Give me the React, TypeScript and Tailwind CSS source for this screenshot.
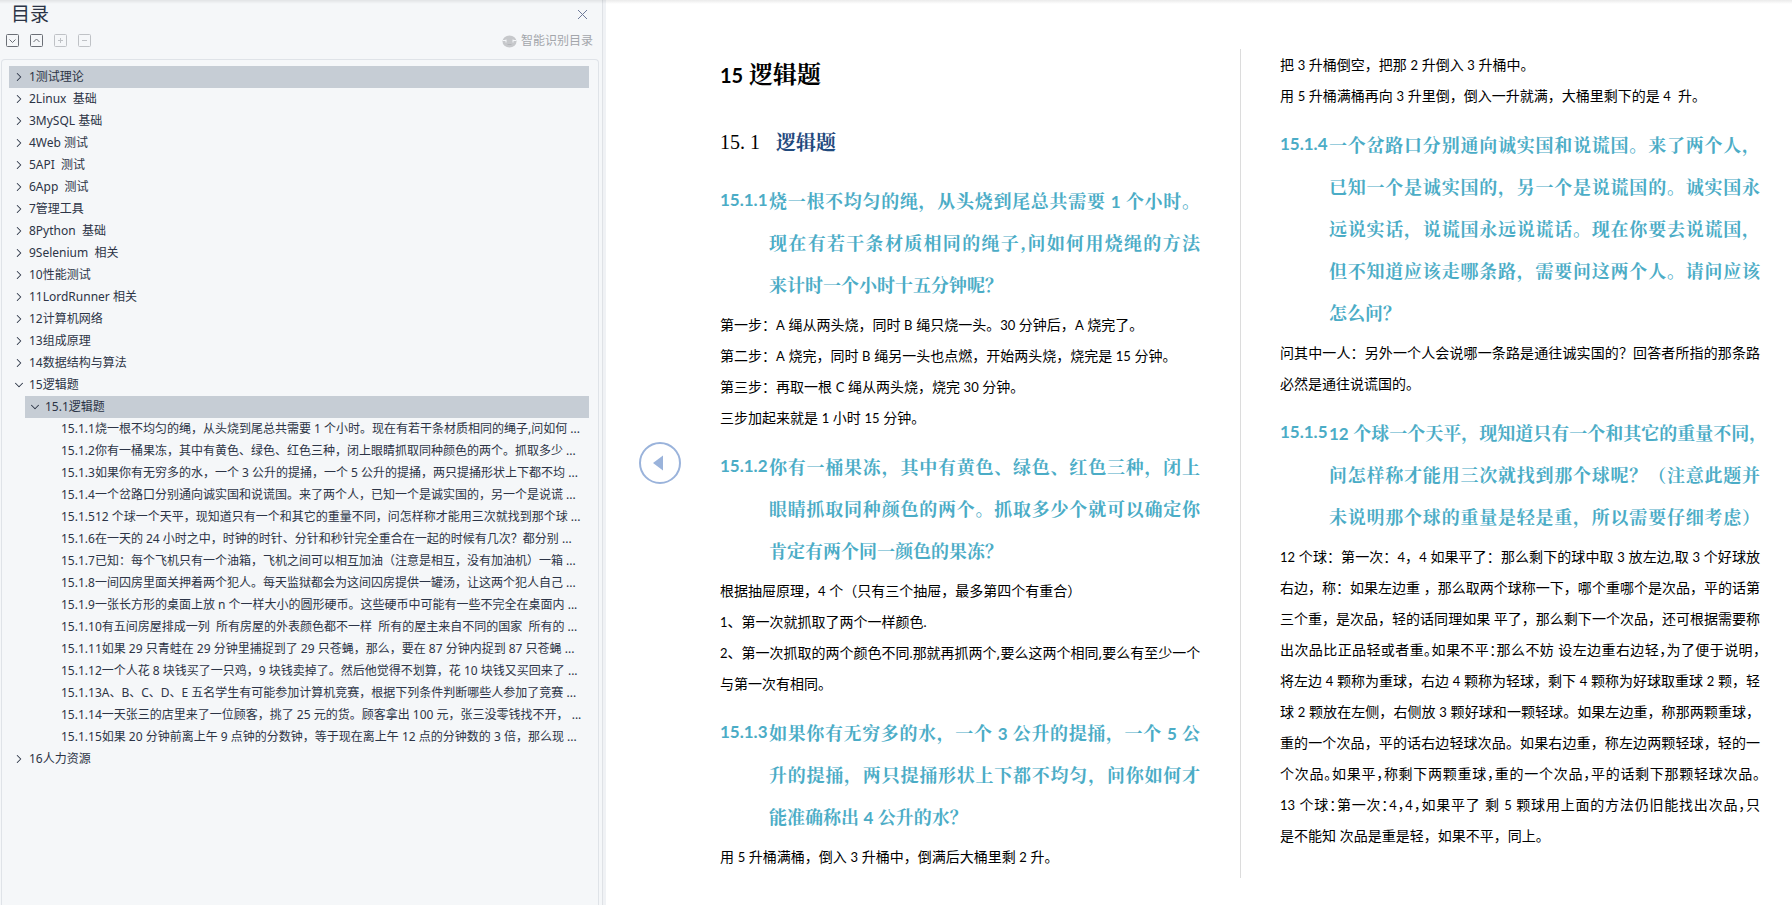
import React, { useState } from 'react';
import { ChevronDown, ChevronRight } from 'lucide-react';
import clsx from 'clsx';

interface OutlineNode {
  title: string;
  children?: OutlineNode[];
}

const OUTLINE: OutlineNode[] = [
  { title: '1测试理论' },
  { title: '2Linux  基础' },
  { title: '3MySQL 基础' },
  { title: '4Web 测试' },
  { title: '5API  测试' },
  { title: '6App  测试' },
  { title: '7管理工具' },
  { title: '8Python  基础' },
  { title: '9Selenium  相关' },
  { title: '10性能测试' },
  { title: '11LordRunner 相关' },
  { title: '12计算机网络' },
  { title: '13组成原理' },
  { title: '14数据结构与算法' },
  {
    title: '15逻辑题',
    children: [
      {
        title: '15.1逻辑题',
        children: [
          { title: '15.1.1烧一根不均匀的绳，从头烧到尾总共需要 1 个小时。现在有若干条材质相同的绳子,问如何 ...' },
          { title: '15.1.2你有一桶果冻，其中有黄色、绿色、红色三种，闭上眼睛抓取同种颜色的两个。抓取多少 ...' },
          { title: '15.1.3如果你有无穷多的水，一个 3 公升的提捅，一个 5 公升的提捅，两只提捅形状上下都不均 ...' },
          { title: '15.1.4一个岔路口分别通向诚实国和说谎国。来了两个人，已知一个是诚实国的，另一个是说谎 ...' },
          { title: '15.1.512 个球一个天平，现知道只有一个和其它的重量不同，问怎样称才能用三次就找到那个球 ...' },
          { title: '15.1.6在一天的 24 小时之中，时钟的时针、分针和秒针完全重合在一起的时候有几次？都分别 ...' },
          { title: '15.1.7已知：每个飞机只有一个油箱，飞机之间可以相互加油（注意是相互，没有加油机）一箱 ...' },
          { title: '15.1.8一间囚房里面关押着两个犯人。每天监狱都会为这间囚房提供一罐汤，让这两个犯人自己 ...' },
          { title: '15.1.9一张长方形的桌面上放 n 个一样大小的圆形硬币。这些硬币中可能有一些不完全在桌面内 ...' },
          { title: '15.1.10有五间房屋排成一列  所有房屋的外表颜色都不一样  所有的屋主来自不同的国家  所有的 ...' },
          { title: '15.1.11如果 29 只青蛙在 29 分钟里捕捉到了 29 只苍蝇，那么，要在 87 分钟内捉到 87 只苍蝇 ...' },
          { title: '15.1.12一个人花 8 块钱买了一只鸡，9 块钱卖掉了。然后他觉得不划算，花 10 块钱又买回来了 ...' },
          { title: '15.1.13A、B、C、D、E 五名学生有可能参加计算机竞赛，根据下列条件判断哪些人参加了竞赛 ...' },
          { title: '15.1.14一天张三的店里来了一位顾客，挑了 25 元的货。顾客拿出 100 元，张三没零钱找不开， ...' },
          { title: '15.1.15如果 20 分钟前离上午 9 点钟的分数钟，等于现在离上午 12 点的分钟数的 3 倍，那么现 ...' },
        ],
      },
    ],
  },
  { title: '16人力资源' },
];

const HIGHLIGHTED = ['1测试理论', '15.1逻辑题'];

function OutlineItem({ node, level }: { node: OutlineNode; level: number }) {
  const [open, setOpen] = useState(Boolean(node.children));
  const isLeaf = level === 2;

  return (
    <li>
      <button
        type="button"
        aria-expanded={isLeaf ? undefined : open}
        onClick={() => setOpen(!open)}
        className={clsx(
          'flex h-[22px] w-full items-center overflow-hidden text-left whitespace-pre',
          isLeaf ? 'pl-5' : 'gap-[3px] pl-[3px]',
          HIGHLIGHTED.includes(node.title) && 'bg-[#c6cdd5]'
        )}
      >
        {!isLeaf &&
          (open ? (
            <ChevronDown size={14} strokeWidth={1.75} className="shrink-0" />
          ) : (
            <ChevronRight size={14} strokeWidth={1.75} className="shrink-0" />
          ))}
        <span>{node.title}</span>
      </button>
      {open && node.children && (
        <ul className="pl-4">
          {node.children.map((child) => (
            <OutlineItem key={child.title} node={child} level={level + 1} />
          ))}
        </ul>
      )}
    </li>
  );
}

function ToolButton({ label, muted, d }: { label: string; muted?: boolean; d: string }) {
  return (
    <button type="button" aria-label={label} className={muted ? 'text-[#bfc2c6]' : 'text-[#6b6f76]'}>
      <svg width="14" height="14" viewBox="0 0 14 14" fill="none" stroke="currentColor">
        <rect x="0.5" y="0.5" width="12" height="12" rx="1" />
        <path d={d} />
      </svg>
    </button>
  );
}

function OutlinePanel() {
  return (
    <aside className="flex w-[603px] shrink-0 flex-col border-r border-[#dfe2e6] bg-[#f5f7f9] text-xs text-[#2c3446]">
      <div className="flex h-7 items-center justify-between pr-3.5 pl-[11px]">
        <h2 className="text-[19px] leading-7">目录</h2>
        <button type="button" aria-label="关闭" className="text-[#6d7a99]">
          <svg width="11" height="11" viewBox="0 0 11 11" fill="none" stroke="currentColor">
            <path d="M1 1l9 9M10 1l-9 9" />
          </svg>
        </button>
      </div>

      <div className="flex h-[31px] items-center justify-between pr-[9px] pb-[5px] pl-1.5">
        <div className="flex gap-2.5">
          <ToolButton label="全部展开" d="M3.500 5.500l3 3 3-3" />
          <ToolButton label="全部收起" d="M3.500 8l3-3 3 3" />
          <ToolButton label="添加" muted d="M4 6.500h5M6.500 4v5" />
          <ToolButton label="删除" muted d="M4 6.500h5" />
        </div>
        <button type="button" className="flex items-center gap-1 text-[#a3a6ab]">
          <svg width="15" height="13" viewBox="0 0 15 13">
            <ellipse cx="7.5" cy="6.5" rx="7" ry="6" fill="#c6c8cb" />
            <path d="M1 5.500h3M11 5.500h3M4 4.500v3M11 4.500v3" fill="none" stroke="#f5f7f9" />
            <path d="M5.500 9.500h4" fill="none" stroke="#b4b6ba" />
          </svg>
          智能识别目录
        </button>
      </div>

      <nav className="mr-[3px] ml-px grow rounded-t-sm border border-b-0 border-[#dfe3e8] pt-1.5 pr-[9px] pl-[7px]">
        <ul>
          {OUTLINE.map((node) => (
            <OutlineItem key={node.title} node={node} level={0} />
          ))}
        </ul>
      </nav>
    </aside>
  );
}

// Latin runs are set in Lato, one step smaller than the Chinese around them
function mix(text: string, latin: string) {
  return text.split(/([A-Za-z0-9.]+)/).map((part, i) =>
    i % 2 ? (
      <span key={i} className={latin}>
        {part}
      </span>
    ) : (
      part
    )
  );
}

interface LinesProps {
  lines: string[];
  latin: string;
  fillLast?: boolean;
  tight?: number[];
}

function Lines({ lines, latin, fillLast, tight = [] }: LinesProps) {
  return (
    <>
      {lines.map((line, i) => (
        <span
          key={line}
          className={clsx(
            'block whitespace-nowrap',
            (i < lines.length - 1 || fillLast) && 'text-justify [text-align-last:justify]',
            tight.includes(i) && "[font-feature-settings:'halt']"
          )}
        >
          {mix(line, latin)}
        </span>
      ))}
    </>
  );
}

function Question({ no, lines, fillLast }: { no: string; lines: string[]; fillLast?: boolean }) {
  return (
    <h3 className="mt-3 mb-1 flex font-['Noto_Serif_CJK_SC','Noto_Sans_CJK_SC',serif] text-lg leading-[42px] font-bold text-[#4bacc6]">
      <span className="w-[49px] shrink-0 font-['Lato',sans-serif] text-[17px] leading-[42px]">{no}</span>
      <span className="min-w-0 grow">
        <Lines lines={lines} fillLast={fillLast} latin="font-['Lato',sans-serif] text-[17px] leading-none" />
      </span>
    </h3>
  );
}

function Para({ lines, fillLast, tight }: { lines: string[]; fillLast?: boolean; tight?: number[] }) {
  return (
    <p className="text-sm leading-[31px]">
      <Lines lines={lines} fillLast={fillLast} tight={tight} latin="font-['Lato',sans-serif] text-[13px] leading-none" />
    </p>
  );
}

function Document() {
  return (
    <main className="flex grow bg-white pr-8 text-black">
      <div className="flex w-[114px] shrink-0 items-center pt-5 pl-[33px]">
        <button type="button" aria-label="上一页" className="text-[#9ab3db]">
          <svg width="42" height="42" viewBox="0 0 42 42">
            <circle cx="21" cy="21" r="20" fill="none" stroke="currentColor" strokeWidth="2" />
            <path d="M14 21l10-7.500v15z" fill="currentColor" />
          </svg>
        </button>
      </div>

      <div className="grid grow grid-cols-2 self-start pt-[49px]">
        <div className="pr-10 pb-1.5">
          <h1 className="font-['Lato','Noto_Serif_CJK_SC','Noto_Sans_CJK_SC',sans-serif] text-2xl leading-[50px] font-bold">
            <span className="text-xl">15</span> 逻辑题
          </h1>
          <h2 className="mt-[22px] mb-4 flex gap-4 text-xl leading-[42px]">
            <span className="font-['Liberation_Serif',serif]">15. 1</span>
            <span className="font-['Noto_Serif_CJK_SC','Noto_Sans_CJK_SC',serif] font-bold text-[#1f497d]">逻辑题</span>
          </h2>

          <Question
            no="15.1.1"
            lines={[
              '烧一根不均匀的绳，从头烧到尾总共需要 1 个小时。',
              '现在有若干条材质相同的绳子,问如何用烧绳的方法',
              '来计时一个小时十五分钟呢？',
            ]}
          />
          <Para lines={['第一步：A 绳从两头烧，同时 B 绳只烧一头。30 分钟后，A 烧完了。']} />
          <Para lines={['第二步：A 烧完，同时 B 绳另一头也点燃，开始两头烧，烧完是 15 分钟。']} />
          <Para lines={['第三步：再取一根 C 绳从两头烧，烧完 30 分钟。']} />
          <Para lines={['三步加起来就是 1 小时 15 分钟。']} />

          <Question
            no="15.1.2"
            lines={[
              '你有一桶果冻，其中有黄色、绿色、红色三种，闭上',
              '眼睛抓取同种颜色的两个。抓取多少个就可以确定你',
              '肯定有两个同一颜色的果冻？',
            ]}
          />
          <Para lines={['根据抽屉原理，4 个（只有三个抽屉，最多第四个有重合）']} />
          <Para lines={['1、第一次就抓取了两个一样颜色.']} />
          <Para
            lines={[
              '2、第一次抓取的两个颜色不同.那就再抓两个,要么这两个相同,要么有至少一个',
              '与第一次有相同。',
            ]}
          />

          <Question
            no="15.1.3"
            lines={[
              '如果你有无穷多的水，一个 3 公升的提捅，一个 5 公',
              '升的提捅，两只提捅形状上下都不均匀，问你如何才',
              '能准确称出 4 公升的水？',
            ]}
          />
          <Para lines={['用 5 升桶满桶，倒入 3 升桶中，倒满后大桶里剩 2 升。']} />
        </div>

        <div className="border-l border-[#dcdcdc] pl-[39px]">
          <Para lines={['把 3 升桶倒空，把那 2 升倒入 3 升桶中。']} />
          <Para lines={['用 5 升桶满桶再向 3 升里倒，倒入一升就满，大桶里剩下的是 4 \u00a0升。']} />

          <Question
            no="15.1.4"
            lines={[
              '一个岔路口分别通向诚实国和说谎国。来了两个人，',
              '已知一个是诚实国的，另一个是说谎国的。诚实国永',
              '远说实话，说谎国永远说谎话。现在你要去说谎国，',
              '但不知道应该走哪条路，需要问这两个人。请问应该',
              '怎么问？',
            ]}
          />
          <Para
            lines={[
              '问其中一人：另外一个人会说哪一条路是通往诚实国的？回答者所指的那条路',
              '必然是通往说谎国的。',
            ]}
          />

          <Question
            no="15.1.5"
            fillLast
            lines={[
              '12 个球一个天平，现知道只有一个和其它的重量不同，',
              '问怎样称才能用三次就找到那个球呢？（注意此题并',
              '未说明那个球的重量是轻是重，所以需要仔细考虑）',
            ]}
          />
          <Para
            fillLast
            tight={[3, 7]}
            lines={[
              '12 个球：第一次：4，4 如果平了：那么剩下的球中取 3 放左边,取 3 个好球放',
              '右边，称：如果左边重 ，那么取两个球称一下，哪个重哪个是次品，平的话第',
              '三个重，是次品，轻的话同理如果 平了，那么剩下一个次品，还可根据需要称',
              '出次品比正品轻或者重。如果不平：那么不妨 设左边重右边轻，为了便于说明，',
              '将左边 4 颗称为重球，右边 4 颗称为轻球，剩下 4 颗称为好球取重球 2 颗，轻',
              '球 2 颗放在左侧，右侧放 3 颗好球和一颗轻球。如果左边重，称那两颗重球，',
              '重的一个次品，平的话右边轻球次品。如果右边重，称左边两颗轻球，轻的一',
              '个次品。如果平，称剩下两颗重球，重的一个次品，平的话剩下那颗轻球次品。',
            ]}
          />
          <Para
            tight={[0]}
            lines={[
              '13 个球：第一次：4，4，如果平了 剩 5 颗球用上面的方法仍旧能找出次品，只',
              '是不能知 次品是重是轻，如果不平，同上。',
            ]}
          />
        </div>
      </div>
    </main>
  );
}

export default function App() {
  return (
    <div
      lang="zh-CN"
      className="relative flex min-h-screen bg-[#f0f2f5] font-['Noto_Sans','Noto_Sans_CJK_SC',sans-serif]"
    >
      <OutlinePanel />
      <div className="w-[3px] shrink-0" />
      <Document />
      {/* shadow cast by the toolbar above */}
      <div className="pointer-events-none absolute inset-x-0 top-0 h-1 bg-linear-to-b from-black/8 to-transparent" />
    </div>
  );
}
